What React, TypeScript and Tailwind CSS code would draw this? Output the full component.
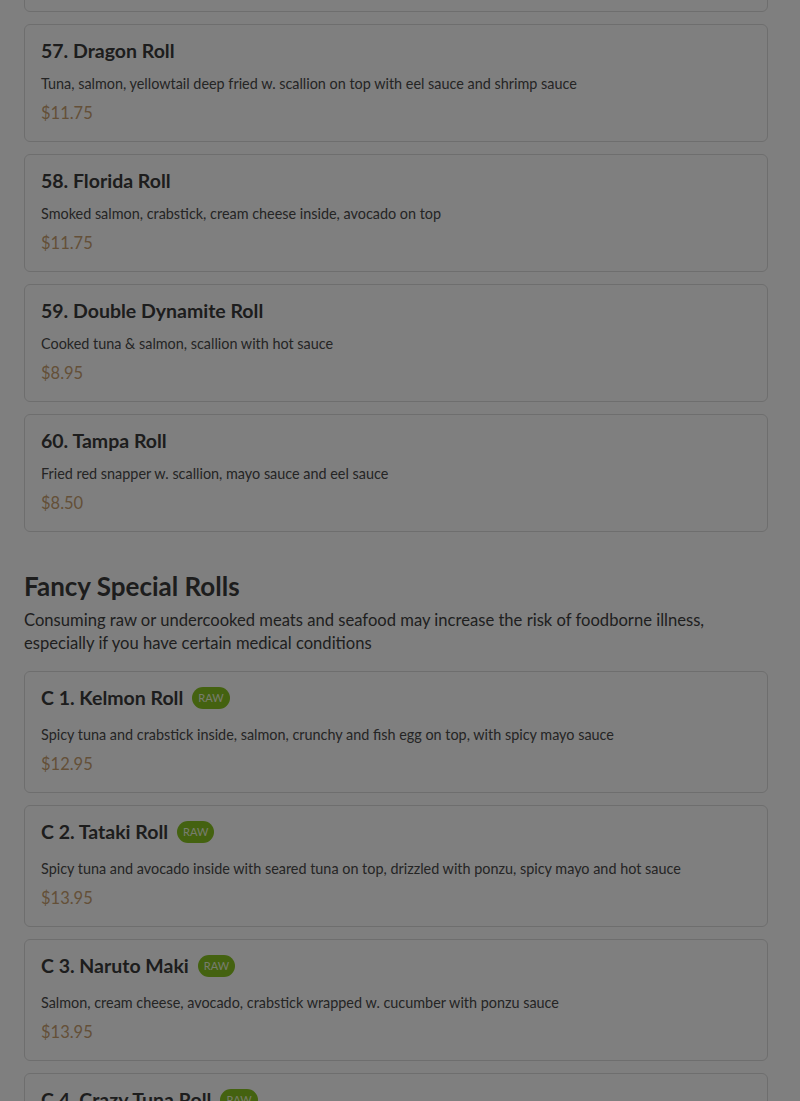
import React from 'react';

type Item = { name: string; desc: string; price: string; raw?: boolean };

const rolls: Item[] = [
  { name: '56. Rainbow Roll', desc: 'Crabstick, avocado, cucumber inside, assorted fish on top', price: '$11.75' },
  { name: '57. Dragon Roll', desc: 'Tuna, salmon, yellowtail deep fried w. scallion on top with eel sauce and shrimp sauce', price: '$11.75' },
  { name: '58. Florida Roll', desc: 'Smoked salmon, crabstick, cream cheese inside, avocado on top', price: '$11.75' },
  { name: '59. Double Dynamite Roll', desc: 'Cooked tuna & salmon, scallion with hot sauce', price: '$8.95' },
  { name: '60. Tampa Roll', desc: 'Fried red snapper w. scallion, mayo sauce and eel sauce', price: '$8.50' },
];

const fancy: Item[] = [
  { name: 'C 1. Kelmon Roll', desc: 'Spicy tuna and crabstick inside, salmon, crunchy and fish egg on top, with spicy mayo sauce', price: '$12.95', raw: true },
  { name: 'C 2. Tataki Roll', desc: 'Spicy tuna and avocado inside with seared tuna on top, drizzled with ponzu, spicy mayo and hot sauce', price: '$13.95', raw: true },
  { name: 'C 3. Naruto Maki', desc: 'Salmon, cream cheese, avocado, crabstick wrapped w. cucumber with ponzu sauce', price: '$13.95', raw: true },
  { name: 'C 4. Crazy Tuna Roll', desc: 'Spicy tuna, avocado inside, tuna and crunchy on top', price: '$13.95', raw: true },
];

function MenuCard({ item }: { item: Item }) {
  return (
    <div className="rounded-md border border-[#dcdcdc] bg-white px-4 pt-[13px] pb-[18px]">
      <div className="flex h-[26px] items-center gap-[9px]">
        <h3 className="text-[19.5px] font-bold leading-[26px] text-[#3a3a3a]">{item.name}</h3>
        {item.raw && (
          <span className="inline-flex h-[22px] items-center rounded-full bg-[#88c420] px-[6px] text-[11px] text-[#eef8dc]">
            RAW
          </span>
        )}
      </div>
      <p className={`text-[14.4px] leading-[20px] text-[#4a4a4a] ${item.raw ? 'mt-[14px]' : 'mt-[10px]'}`}>{item.desc}</p>
      <p className="mt-[9px] text-[16.5px] leading-[20px] text-[#c8a070]">{item.price}</p>
    </div>
  );
}

export default function App() {
  return (
    <div className="relative min-h-screen overflow-hidden bg-white" style={{ fontFamily: 'Lato, "Noto Sans", sans-serif' }}>
      <div className="-mt-[106px] pl-6 pr-8 pb-10">
        <div className="flex flex-col gap-3">
          {rolls.map((r) => (
            <MenuCard key={r.name} item={r} />
          ))}
        </div>

        <h2 className="mt-[37px] text-[26px] font-bold leading-[34px] text-[#3a3a3a]">Fancy Special Rolls</h2>
        <p className="mt-[6px] text-[16.6px] leading-[23px] text-[#3e3e3e]">
          Consuming raw or undercooked meats and seafood may increase the risk of foodborne illness, especially if you have certain medical conditions
        </p>

        <div className="mt-[16px] flex flex-col gap-3">
          {fancy.map((r) => (
            <MenuCard key={r.name} item={r} />
          ))}
        </div>
      </div>

      {/* dim backdrop */}
      <div className="fixed inset-0 bg-black/50" />
    </div>
  );
}
